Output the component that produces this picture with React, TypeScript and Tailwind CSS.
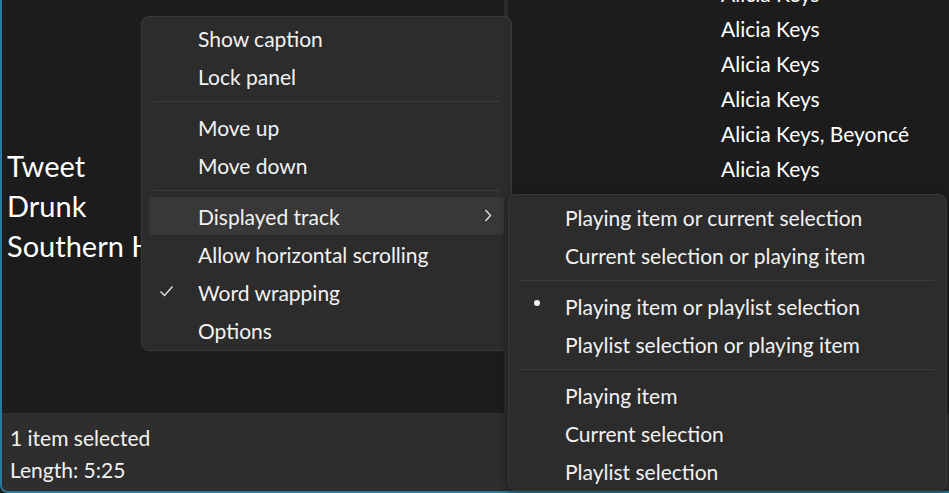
import React from "react";

const font = { fontFamily: "Lato, 'Noto Sans', sans-serif" };

function Sep() {
  return (
    <div className="h-[13px] flex items-center px-[11px]">
      <div className="h-px w-full bg-[#3d3d3d]" />
    </div>
  );
}

function Item({
  label,
  active,
  check,
  bullet,
  chevron,
}: {
  label: string;
  active?: boolean;
  check?: boolean;
  bullet?: boolean;
  chevron?: boolean;
}) {
  return (
    <div
      className={`relative h-[38px] mx-[7px] rounded-[4px] flex items-center ${
        active ? "bg-[#383838]" : ""
      }`}
    >
      {check && (
        <svg
          className="absolute left-[10px] top-[11px]"
          width="15"
          height="14"
          viewBox="0 0 15 14"
          fill="none"
        >
          <path d="M1.5 7.5 L5.5 11.5 L13.5 2.5" stroke="#e6e6e6" strokeWidth="1.3" />
        </svg>
      )}
      {bullet && (
        <div className="absolute left-[18px] top-[13px] w-[6px] h-[6px] rounded-full bg-[#f0f0f0]" />
      )}
      <span className="pl-[49px] text-[21px] text-[#f2f2f2] leading-none whitespace-nowrap">
        {label}
      </span>
      {chevron && (
        <svg
          className="absolute right-[12px] top-[12px]"
          width="8"
          height="13"
          viewBox="0 0 8 13"
          fill="none"
        >
          <path d="M1.5 1 L6.5 6.5 L1.5 12" stroke="#e6e6e6" strokeWidth="1.3" />
        </svg>
      )}
    </div>
  );
}

export default function App() {
  return (
    <div
      className="w-[949px] h-[493px] relative overflow-hidden bg-[#1c1c1c]"
      style={font}
    >
      <div className="w-full h-full flex flex-col border-l-2 border-b-2 border-[#2a7b9b] rounded-bl-[8px] overflow-hidden">
        <div className="flex h-[413px]">
          <div className="w-[502px] bg-[#1c1c1c] pl-[5px] pt-[146px] text-white text-[29px] leading-[40px]">
            <div>Tweet</div>
            <div>Drunk</div>
            <div className="whitespace-nowrap">Southern Hospitality</div>
          </div>
          <div className="w-[4px] bg-[#2b2b2b]" />
          <div className="flex-1 bg-[#1c1c1c] pl-[213px] overflow-hidden">
            <div className="mt-[-24px] text-[21px] leading-[35px] text-white">
              <div>Alicia Keys</div>
              <div>Alicia Keys</div>
              <div>Alicia Keys</div>
              <div>Alicia Keys</div>
              <div>Alicia Keys, Beyoncé</div>
              <div>Alicia Keys</div>
            </div>
          </div>
        </div>
        <div className="flex-1 bg-[#2e2e2e] pl-[8px] pt-[9px] text-[21px] leading-[32px] text-[#f2f2f2]">
          <div>1 item selected</div>
          <div>Length: 5:25</div>
        </div>
      </div>

      {/* main context menu */}
      <div className="absolute left-[141px] top-[16px] w-[371px] h-[335px] bg-[#2c2c2c] border border-[#3a3a3a] rounded-[8px] pt-[2px]">
        <Item label="Show caption" />
        <Item label="Lock panel" />
        <Sep />
        <Item label="Move up" />
        <Item label="Move down" />
        <Sep />
        <Item label="Displayed track" active chevron />
        <Item label="Allow horizontal scrolling" />
        <Item label="Word wrapping" check />
        <Item label="Options" />
      </div>

      {/* submenu */}
      <div className="absolute left-[508px] top-[194px] w-[439px] h-[297px] bg-[#2c2c2c] border border-[#3a3a3a] rounded-[8px] pt-[3px] shadow-[0_4px_12px_rgba(0,0,0,0.4)]">
        <Item label="Playing item or current selection" />
        <Item label="Current selection or playing item" />
        <Sep />
        <Item label="Playing item or playlist selection" bullet />
        <Item label="Playlist selection or playing item" />
        <Sep />
        <Item label="Playing item" />
        <Item label="Current selection" />
        <Item label="Playlist selection" />
      </div>
    </div>
  );
}
